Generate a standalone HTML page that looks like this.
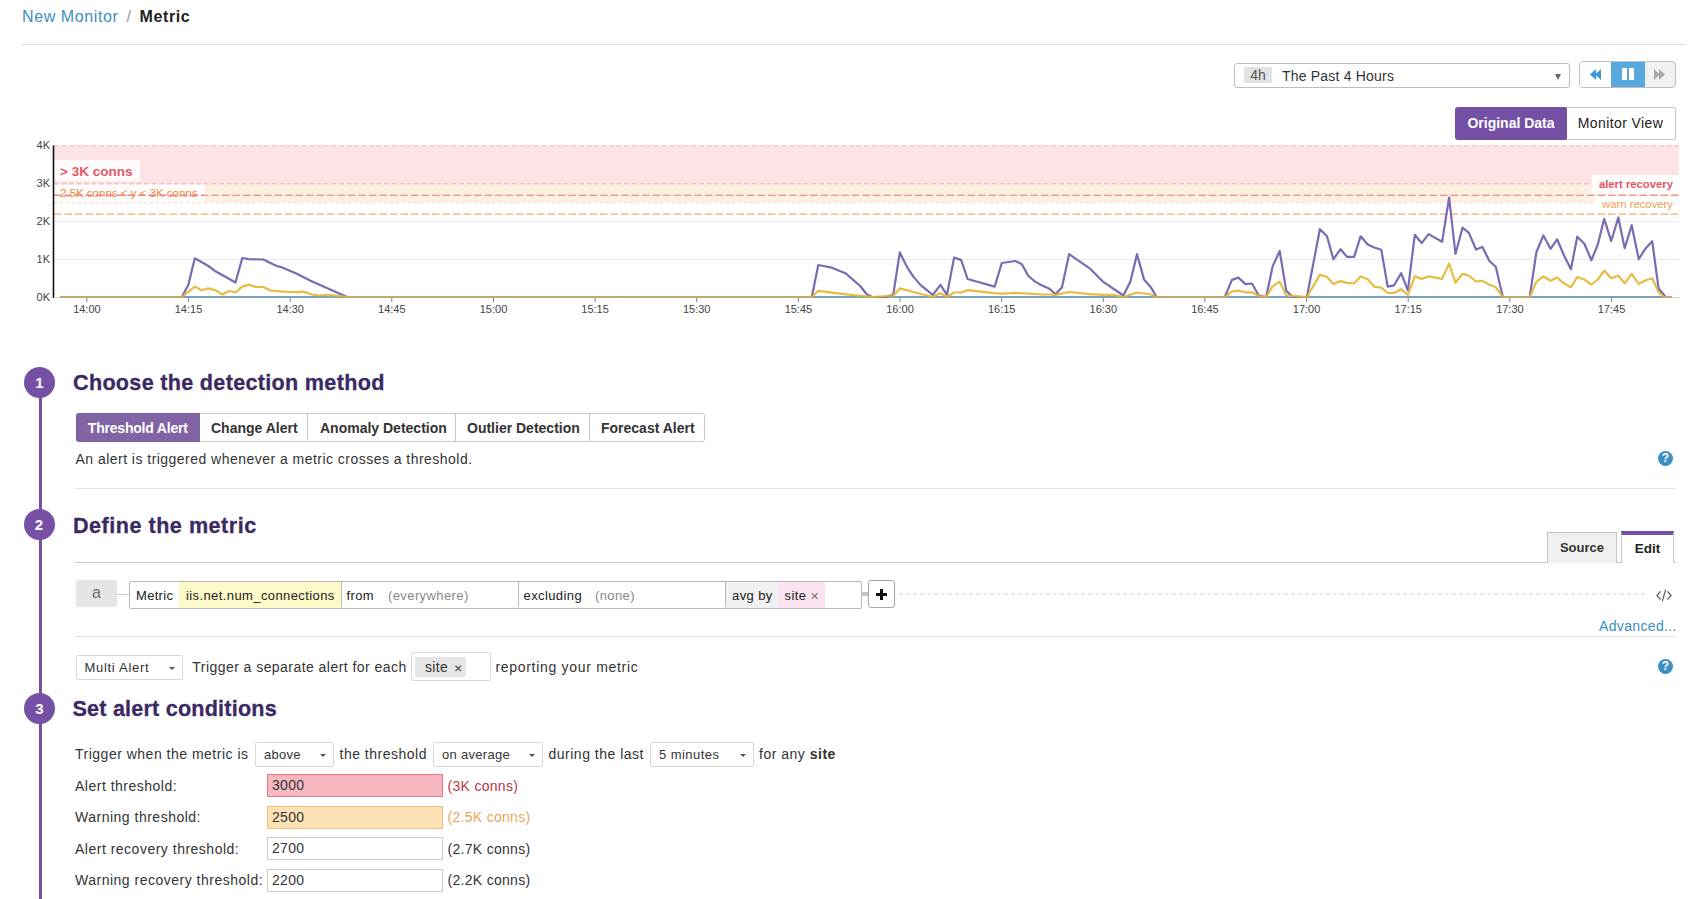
<!DOCTYPE html>
<html><head><meta charset="utf-8">
<style>
*{box-sizing:border-box;margin:0;padding:0}
html,body{width:1694px;height:899px;overflow:hidden;background:#fff}
body{position:relative;font-family:"Liberation Sans",sans-serif;color:#333;font-size:14px}
.a{position:absolute;white-space:nowrap}
.t{letter-spacing:0.5px}
.btn{position:absolute;border:1px solid #c8c8c8;background:#fff;display:flex;align-items:center;justify-content:center;white-space:nowrap}
.sel{position:absolute;border:1px solid #d9d9d9;background:#fff;border-radius:2px;white-space:nowrap}
.caret{position:absolute;width:0;height:0;border-left:3.5px solid transparent;border-right:3.5px solid transparent;border-top:3.5px solid #555;margin-left:0.5px;margin-top:0.5px}
.hline{position:absolute;height:1px;background:#e3e3e3}
.circ{position:absolute;width:31px;height:31px;border-radius:50%;background:#7550a5;color:#fff;font-weight:700;font-size:15px;text-align:center;line-height:31px}
.h2{position:absolute;font-size:21.6px;font-weight:700;color:#3b2963;white-space:nowrap;letter-spacing:0.1px;-webkit-text-stroke:0.3px #3b2963}
.help{position:absolute;width:15px;height:15px;border-radius:50%;background:#3d8fc6;color:#fff;font-weight:700;font-size:12px;line-height:15px;text-align:center}
.inp{position:absolute;border:1px solid #ccc;background:#fff;font-size:14px;padding-left:4px;line-height:20px;letter-spacing:0.3px}
</style></head><body>
<!-- breadcrumb -->
<div class="a" id="bc" style="left:22px;top:7px;font-size:16px;line-height:20px;letter-spacing:0.6px"><span style="color:#3b8ec4">New Monitor</span> <span style="color:#999;padding:0 3px">/</span> <span style="color:#222;font-weight:700">Metric</span></div>
<div class="hline" style="left:21px;top:44px;width:1664px;background:#dcdcdc"></div>

<!-- time selector -->
<div class="a" style="left:1234px;top:63px;width:336px;height:25px;border:1px solid #bdbdbd;border-radius:3px;background:#fff"></div>
<div class="a" style="left:1244px;top:67px;width:28px;height:16px;background:#e2e2e2;border-radius:2px;color:#555;font-size:14px;line-height:16px;text-align:center">4h</div>
<div class="a" id="past" style="left:1282px;top:66px;font-size:14px;line-height:20px;color:#333;letter-spacing:0.2px">The Past 4 Hours</div>
<div class="caret" style="left:1554px;top:73px;border-left-width:3.5px;border-right-width:3.5px;border-top:6px solid #666"></div>

<!-- play controls -->
<div class="a" style="left:1579px;top:61px;width:97px;height:27px;border:1px solid #bfbfbf;border-radius:4px;background:#f1f1f1;overflow:hidden">
  <div class="a" style="left:0;top:0;width:31px;height:25px;background:#fff"></div>
  <div class="a" style="left:31px;top:0;width:34px;height:25px;background:#59a9de"></div>
</div>
<svg class="a" style="left:1588px;top:67px" width="16" height="15" viewBox="0 0 16 15">
  <polygon points="2,7.5 8,2 8,13" fill="#3a98d6"/><polygon points="7,7.5 13,2 13,13" fill="#3a98d6"/>
</svg>
<div class="a" style="left:1622px;top:68px;width:5px;height:12px;background:#fff"></div>
<div class="a" style="left:1629px;top:68px;width:5px;height:12px;background:#fff"></div>
<svg class="a" style="left:1652px;top:67px" width="16" height="15" viewBox="0 0 16 15">
  <polygon points="2,2 8,7.5 2,13" fill="#a9a9a9"/><polygon points="7,2 13,7.5 7,13" fill="#a9a9a9"/>
</svg>

<!-- original / monitor view -->
<div class="a" style="left:1455px;top:107px;width:112px;height:33px;background:#7450a5;border-radius:3px 0 0 3px;color:#fff;font-weight:700;font-size:14px;line-height:33px;text-align:center">Original Data</div>
<div class="a" style="left:1566px;top:107px;width:110px;height:33px;border:1px solid #c4c4c4;border-left:none;border-radius:0 3px 3px 0;color:#222;font-size:14px;line-height:31px;text-align:center;letter-spacing:0.4px">Monitor View</div>
<svg class="a" style="left:0;top:0" width="1694" height="330" viewBox="0 0 1694 330">
<rect x="54" y="145.4" width="1625" height="37.9" fill="#fde3e5"/>
<rect x="54" y="183.3" width="1625" height="18.9" fill="#fdf0e2"/>
<line x1="54" x2="1679" y1="259.6" y2="259.6" stroke="#e4e9f0" stroke-width="1"/>
<line x1="54" x2="1679" y1="221.7" y2="221.7" stroke="#e4e9f0" stroke-width="1"/>
<rect x="54" y="160" width="86" height="21" fill="#fff" fill-opacity="0.85"/>
<rect x="54" y="184.1" width="151" height="17.9" fill="#fff" fill-opacity="0.85"/>
<line x1="54" x2="1679" y1="145.9" y2="145.9" stroke="#efbcc1" stroke-width="1" stroke-dasharray="5,2.5"/>
<line x1="54" x2="1679" y1="183.8" y2="183.8" stroke="#e9a4aa" stroke-width="1" stroke-dasharray="5,2.5"/>
<line x1="54" x2="1679" y1="195.2" y2="195.2" stroke="#e6737c" stroke-width="1.1" stroke-dasharray="7.5,3"/>
<line x1="54" x2="1679" y1="202.8" y2="202.8" stroke="#f6d9bd" stroke-width="1" stroke-dasharray="3,3"/>
<line x1="54" x2="1679" y1="214.1" y2="214.1" stroke="#f0ae72" stroke-width="1.1" stroke-dasharray="7.5,3"/>
<rect x="1592" y="175" width="87" height="18.5" fill="#fff" fill-opacity="0.95"/>
<rect x="1595" y="196" width="84" height="16.5" fill="#fff" fill-opacity="0.95"/>
<text x="60" y="175.5" font-family="Liberation Sans" font-weight="700" font-size="13.5" fill="#e65567">&gt; 3K conns</text>
<text x="60" y="197" font-family="Liberation Sans" font-size="11.5" fill="#ec8c3e">2.5K conns &lt; y &lt; 3K conns</text>
<text x="1673" y="188" text-anchor="end" font-family="Liberation Sans" font-weight="700" font-size="11.3" fill="#e65567">alert recovery</text>
<text x="1673" y="207.5" text-anchor="end" font-family="Liberation Sans" font-size="11.3" fill="#f0a050">warn recovery</text>
<line x1="54" x2="205" y1="195.2" y2="195.2" stroke="#ea7880" stroke-width="1" stroke-dasharray="7,3.5" stroke-opacity="0.8"/>
<line x1="53.5" x2="53.5" y1="145.4" y2="298" stroke="#111" stroke-width="1.6"/>
<line x1="54" x2="1679" y1="297.5" y2="297.5" stroke="#d0d0d0" stroke-width="1"/>
<text x="50" y="301.0" text-anchor="end" font-family="Liberation Sans" font-size="11" fill="#444">0K</text>
<text x="50" y="263.1" text-anchor="end" font-family="Liberation Sans" font-size="11" fill="#444">1K</text>
<text x="50" y="225.2" text-anchor="end" font-family="Liberation Sans" font-size="11" fill="#444">2K</text>
<text x="50" y="187.3" text-anchor="end" font-family="Liberation Sans" font-size="11" fill="#444">3K</text>
<text x="50" y="149.4" text-anchor="end" font-family="Liberation Sans" font-size="11" fill="#444">4K</text>
<line x1="86.9" x2="86.9" y1="297" y2="302" stroke="#7d8590" stroke-width="1"/>
<text x="86.9" y="312.5" text-anchor="middle" font-family="Liberation Sans" font-size="11" fill="#444">14:00</text>
<line x1="188.5" x2="188.5" y1="297" y2="302" stroke="#7d8590" stroke-width="1"/>
<text x="188.5" y="312.5" text-anchor="middle" font-family="Liberation Sans" font-size="11" fill="#444">14:15</text>
<line x1="290.2" x2="290.2" y1="297" y2="302" stroke="#7d8590" stroke-width="1"/>
<text x="290.2" y="312.5" text-anchor="middle" font-family="Liberation Sans" font-size="11" fill="#444">14:30</text>
<line x1="391.8" x2="391.8" y1="297" y2="302" stroke="#7d8590" stroke-width="1"/>
<text x="391.8" y="312.5" text-anchor="middle" font-family="Liberation Sans" font-size="11" fill="#444">14:45</text>
<line x1="493.5" x2="493.5" y1="297" y2="302" stroke="#7d8590" stroke-width="1"/>
<text x="493.5" y="312.5" text-anchor="middle" font-family="Liberation Sans" font-size="11" fill="#444">15:00</text>
<line x1="595.1" x2="595.1" y1="297" y2="302" stroke="#7d8590" stroke-width="1"/>
<text x="595.1" y="312.5" text-anchor="middle" font-family="Liberation Sans" font-size="11" fill="#444">15:15</text>
<line x1="696.7" x2="696.7" y1="297" y2="302" stroke="#7d8590" stroke-width="1"/>
<text x="696.7" y="312.5" text-anchor="middle" font-family="Liberation Sans" font-size="11" fill="#444">15:30</text>
<line x1="798.4" x2="798.4" y1="297" y2="302" stroke="#7d8590" stroke-width="1"/>
<text x="798.4" y="312.5" text-anchor="middle" font-family="Liberation Sans" font-size="11" fill="#444">15:45</text>
<line x1="900.0" x2="900.0" y1="297" y2="302" stroke="#7d8590" stroke-width="1"/>
<text x="900.0" y="312.5" text-anchor="middle" font-family="Liberation Sans" font-size="11" fill="#444">16:00</text>
<line x1="1001.7" x2="1001.7" y1="297" y2="302" stroke="#7d8590" stroke-width="1"/>
<text x="1001.7" y="312.5" text-anchor="middle" font-family="Liberation Sans" font-size="11" fill="#444">16:15</text>
<line x1="1103.3" x2="1103.3" y1="297" y2="302" stroke="#7d8590" stroke-width="1"/>
<text x="1103.3" y="312.5" text-anchor="middle" font-family="Liberation Sans" font-size="11" fill="#444">16:30</text>
<line x1="1204.9" x2="1204.9" y1="297" y2="302" stroke="#7d8590" stroke-width="1"/>
<text x="1204.9" y="312.5" text-anchor="middle" font-family="Liberation Sans" font-size="11" fill="#444">16:45</text>
<line x1="1306.6" x2="1306.6" y1="297" y2="302" stroke="#7d8590" stroke-width="1"/>
<text x="1306.6" y="312.5" text-anchor="middle" font-family="Liberation Sans" font-size="11" fill="#444">17:00</text>
<line x1="1408.2" x2="1408.2" y1="297" y2="302" stroke="#7d8590" stroke-width="1"/>
<text x="1408.2" y="312.5" text-anchor="middle" font-family="Liberation Sans" font-size="11" fill="#444">17:15</text>
<line x1="1509.9" x2="1509.9" y1="297" y2="302" stroke="#7d8590" stroke-width="1"/>
<text x="1509.9" y="312.5" text-anchor="middle" font-family="Liberation Sans" font-size="11" fill="#444">17:30</text>
<line x1="1611.5" x2="1611.5" y1="297" y2="302" stroke="#7d8590" stroke-width="1"/>
<text x="1611.5" y="312.5" text-anchor="middle" font-family="Liberation Sans" font-size="11" fill="#444">17:45</text>
<line x1="182" x2="1672" y1="297" y2="297" stroke="#7aa2bd" stroke-width="2.2"/>
<polyline points="60.0,297.0 181.8,297.0 188.3,284.9 194.8,258.3 208.4,266.0 215.5,271.3 235.5,282.5 242.3,258.0 248.9,259.1 263.3,259.5 270.4,263.0 276.8,266.0 282.2,267.4 296.3,273.6 310.5,280.7 347.1,297.0 350.6,297.0 811.8,297.0 818.3,265.0 831.9,267.7 846.0,273.6 860.2,286.0 866.7,294.3 872.0,297.0 887.4,297.0 893.3,294.3 899.8,252.4 906.8,266.6 913.3,276.6 920.4,284.9 932.8,294.9 940.5,284.9 947.0,294.9 954.1,257.5 961.2,260.1 967.6,279.0 994.7,286.6 1001.8,263.0 1015.4,261.0 1021.9,264.2 1028.4,276.0 1035.5,281.9 1042.0,285.5 1049.0,288.4 1055.5,294.3 1062.0,287.2 1069.1,254.2 1090.4,268.9 1103.3,281.9 1123.4,295.5 1130.5,281.3 1137.0,254.2 1144.1,279.6 1151.2,287.8 1156.5,297.0 1158.8,297.0 1224.8,297.0 1231.9,279.9 1238.4,277.6 1245.5,284.1 1252.0,283.5 1258.5,295.3 1266.2,297.0 1272.6,266.4 1279.7,251.0 1286.2,290.6 1292.7,297.0 1306.9,297.0 1319.9,229.2 1327.0,236.3 1333.4,259.3 1340.5,249.2 1347.0,256.9 1354.1,256.9 1360.6,236.3 1367.7,244.5 1374.2,247.5 1381.3,249.8 1387.7,286.6 1394.1,285.3 1401.1,273.2 1407.9,290.4 1414.8,234.8 1421.6,243.1 1428.6,234.1 1442.1,241.8 1449.1,197.7 1455.5,254.0 1462.5,227.7 1468.9,232.9 1476.0,249.5 1482.4,246.9 1489.4,261.0 1495.8,266.8 1502.8,297.0 1529.7,297.0 1536.4,252.0 1543.4,235.4 1550.5,248.8 1557.1,239.3 1563.9,255.2 1570.9,269.3 1577.3,236.7 1584.4,243.7 1591.4,260.4 1597.8,244.4 1604.2,218.8 1611.2,241.2 1618.3,217.5 1624.7,248.2 1631.7,225.2 1638.7,259.1 1645.8,248.2 1652.2,241.2 1658.6,288.5 1665.6,297.0 1672.0,297.0" fill="none" stroke="#7a6ab4" stroke-width="2.2" stroke-linejoin="round"/>
<polyline points="60.0,297.0 181.8,297.0 194.8,286.6 201.6,290.2 208.4,288.4 215.5,290.2 222.5,294.5 229.0,291.0 235.5,292.5 242.3,286.6 248.9,284.6 255.6,287.0 263.3,287.0 270.4,290.5 279.8,291.4 289.2,292.0 296.3,292.2 303.4,291.6 311.7,294.5 318.8,295.5 327.0,294.9 335.3,295.7 347.1,297.0 811.8,297.0 818.3,290.8 846.0,294.3 872.0,297.0 893.3,295.5 899.8,288.4 932.8,297.0 940.5,293.1 947.0,297.0 954.1,292.5 961.2,292.5 967.6,290.2 994.2,293.1 1001.8,293.7 1015.4,292.9 1029.0,293.7 1042.0,294.5 1049.0,294.5 1055.5,294.9 1069.1,292.0 1090.4,294.1 1103.3,294.9 1112.8,294.9 1123.4,297.0 1137.0,292.5 1151.2,294.5 1156.5,297.0 1224.8,297.0 1231.9,291.7 1238.4,290.6 1245.5,292.3 1252.0,292.3 1258.5,295.9 1266.2,297.0 1272.6,286.4 1279.7,281.7 1286.2,295.3 1306.9,297.0 1319.9,274.6 1327.0,277.0 1333.4,284.1 1340.5,281.1 1347.0,282.9 1354.1,283.5 1360.6,276.4 1367.7,279.3 1374.2,286.8 1381.3,287.6 1387.7,293.0 1394.1,293.0 1401.1,289.2 1407.9,294.9 1414.8,276.4 1421.6,278.9 1428.6,276.4 1442.1,278.9 1449.1,263.6 1455.5,282.8 1462.5,273.8 1468.9,275.7 1476.0,281.5 1482.4,280.9 1489.4,284.7 1495.8,287.2 1502.8,297.0 1529.7,297.0 1536.4,281.9 1543.4,276.4 1550.5,280.8 1557.1,277.6 1563.9,283.4 1570.9,287.2 1577.3,277.0 1584.4,279.5 1591.4,284.7 1597.8,279.5 1604.2,270.6 1611.2,278.3 1618.3,275.7 1624.7,283.4 1631.7,273.8 1638.7,284.0 1645.8,280.2 1652.2,278.3 1658.6,292.3 1664.3,297.0 1672.0,297.0" fill="none" stroke="#e4b52f" stroke-width="2.2" stroke-linejoin="round" stroke-opacity="0.9"/>
<line x1="60.0" x2="181.8" y1="297" y2="297" stroke="#bfa872" stroke-width="2"/>
<line x1="347.1" x2="811.8" y1="297" y2="297" stroke="#bfa872" stroke-width="2"/>
<line x1="1156.5" x2="1224.8" y1="297" y2="297" stroke="#bfa872" stroke-width="2"/>
<line x1="1502.8" x2="1529.7" y1="297" y2="297" stroke="#bfa872" stroke-width="2"/>
<line x1="1664.3" x2="1672.0" y1="297" y2="297" stroke="#bfa872" stroke-width="2"/>
</svg>
<!-- timeline vertical line -->
<div class="a" style="left:38.5px;top:382px;width:3px;height:517px;background:#7550a5"></div>

<!-- ===== Section 1 ===== -->
<div class="circ" style="left:24px;top:366.5px">1</div>
<div class="h2" id="h1" style="left:73px;top:372px;line-height:21.6px;letter-spacing:0.3px">Choose the detection method</div>

<div class="a" style="left:75.5px;top:413px;width:629px;height:29px;border:1px solid #c9c9c9;border-radius:3px;background:#fff"></div>
<div class="a" style="left:75.5px;top:413px;width:124.5px;height:29px;background:#8064a4;border-radius:3px 0 0 3px;color:#fff;font-weight:700;font-size:14px;line-height:30px;text-align:center;letter-spacing:-0.2px">Threshold Alert</div>
<div class="a" style="left:307px;top:413px;width:1px;height:29px;background:#c9c9c9"></div>
<div class="a" style="left:454.5px;top:413px;width:1px;height:29px;background:#c9c9c9"></div>
<div class="a" style="left:588.5px;top:413px;width:1px;height:29px;background:#c9c9c9"></div>
<div class="a t1" style="left:211px;top:413px;font-weight:700;font-size:14px;line-height:30px;color:#333;letter-spacing:0px">Change Alert</div>
<div class="a t1" style="left:320px;top:413px;font-weight:700;font-size:14px;line-height:30px;color:#333;letter-spacing:0px">Anomaly Detection</div>
<div class="a t1" style="left:467px;top:413px;font-weight:700;font-size:14px;line-height:30px;color:#333;letter-spacing:0px">Outlier Detection</div>
<div class="a t1" style="left:601px;top:413px;font-weight:700;font-size:14px;line-height:30px;color:#333;letter-spacing:0px">Forecast Alert</div>

<div class="a t" id="desc" style="left:75.5px;top:451px;line-height:16px;letter-spacing:0.47px">An alert is triggered whenever a metric crosses a threshold.</div>
<div class="help" style="left:1658px;top:450.5px">?</div>
<div class="hline" style="left:75px;top:488px;width:1601px"></div>

<!-- ===== Section 2 ===== -->
<div class="circ" style="left:23.5px;top:508.5px">2</div>
<div class="h2" id="h2" style="left:73px;top:514.5px;line-height:21.6px;letter-spacing:0.5px">Define the metric</div>

<div class="hline" style="left:75px;top:562px;width:1601px;background:#c8c8c8"></div>
<div class="a" style="left:1547px;top:532px;width:70px;height:31px;background:#f0f0f0;border:1px solid #c4c4c4;border-bottom:none;font-weight:700;font-size:13px;line-height:30px;text-align:center;color:#333;letter-spacing:0px">Source</div>
<div class="a" style="left:1621px;top:531px;width:53px;height:32px;background:#fff;border:1px solid #c4c4c4;border-top:4px solid #7550a5;border-bottom:none;font-weight:700;font-size:13.5px;line-height:28px;text-align:center;color:#222">Edit</div>

<div class="a" style="left:76px;top:580px;width:41px;height:27px;background:#e5e5e5;border-radius:3px;color:#707070;font-size:16px;line-height:26px;text-align:center">a</div>
<div class="a" style="left:117px;top:594px;width:12px;height:1px;background:#c8c8c8"></div>
<div class="a" style="left:128.5px;top:581px;width:733px;height:27.5px;border:1px solid #b8b8b8;border-radius:2px;background:#fff;overflow:hidden">
  <div class="a" style="left:49.5px;top:0;width:162px;height:26px;background:#fdf9c9"></div>
  <div class="a" style="left:211.5px;top:0;width:1px;height:25px;background:#b8b8b8"></div>
  <div class="a" style="left:388px;top:0;width:1px;height:25px;background:#b8b8b8"></div>
  <div class="a" style="left:595px;top:0;width:1px;height:25px;background:#b8b8b8"></div>
  <div class="a" style="left:596px;top:0;width:53px;height:26px;background:#f1f1f1"></div>
  <div class="a" style="left:648.5px;top:0;width:47px;height:26px;background:#fbe3f1"></div>
</div>
<div class="a t" style="left:136px;top:588px;font-size:13px;line-height:16px;letter-spacing:0.3px;color:#222">Metric</div>
<div class="a t" style="left:186px;top:588px;font-size:13px;line-height:16px;letter-spacing:0.4px;color:#222">iis.net.num_connections</div>
<div class="a t" style="left:346.5px;top:588px;font-size:13px;line-height:16px;letter-spacing:0.4px;color:#222">from</div>
<div class="a t" style="left:388px;top:588px;font-size:13px;line-height:16px;letter-spacing:0.4px;color:#888">(everywhere)</div>
<div class="a t" style="left:523.5px;top:588px;font-size:13px;line-height:16px;letter-spacing:0.4px;color:#222">excluding</div>
<div class="a t" style="left:595px;top:588px;font-size:13px;line-height:16px;letter-spacing:0.4px;color:#888">(none)</div>
<div class="a t" style="left:732px;top:588px;font-size:13px;line-height:16px;letter-spacing:0.4px;color:#222">avg by</div>
<div class="a t" style="left:784.5px;top:588px;font-size:13px;line-height:16px;letter-spacing:0.4px;color:#222">site <span style="color:#777;font-size:11px">&#x2715;</span></div>
<div class="a" style="left:861px;top:592px;width:7px;height:3.5px;background:#c4c4c4"></div>
<div class="a" style="left:868px;top:580px;width:27px;height:28px;border:1px solid #a8a8a8;border-radius:3px;background:#fff"></div>
<div class="a" style="left:876px;top:593px;width:11px;height:2.5px;background:#111"></div>
<div class="a" style="left:880.2px;top:588.7px;width:2.5px;height:11px;background:#111"></div>
<svg class="a" style="left:899px;top:593px" width="750" height="2"><line x1="0" x2="749" y1="1" y2="1" stroke="#d3d3d3" stroke-width="1" stroke-dasharray="4,3"/></svg>
<svg class="a" style="left:1656px;top:589px" width="16" height="13" viewBox="0 0 16 13"><path d="M4.6,2.4 L0.9,6.5 L4.6,10.6 M9.6,0.6 L6.4,12.2 M11.4,2.4 L15.1,6.5 L11.4,10.6" fill="none" stroke="#5a5a5a" stroke-width="1.2"/></svg>
<div class="a" id="adv" style="left:1599px;top:617.5px;font-size:14px;line-height:16px;color:#3b8ec4;letter-spacing:0.35px">Advanced...</div>
<div class="hline" style="left:75px;top:636px;width:1601px"></div>

<div class="sel" style="left:76px;top:655px;width:107px;height:25px"></div>
<div class="a t" style="left:84.5px;top:659.5px;font-size:13px;line-height:16px;letter-spacing:0.7px;color:#333">Multi Alert</div>
<div class="caret" style="left:168px;top:666px"></div>
<div class="a t" id="trig" style="left:192.3px;top:659px;line-height:16px;letter-spacing:0.45px">Trigger a separate alert for each</div>
<div class="sel" style="left:410.5px;top:652px;width:80px;height:28.5px"></div>
<div class="a" style="left:414.5px;top:657px;width:51px;height:19.5px;background:#e6e6e6;border-radius:2px"></div>
<div class="a t" style="left:425px;top:659px;font-size:14px;line-height:16px;letter-spacing:0.3px;color:#333">site<span style="color:#666;font-size:10px;font-weight:700;margin-left:5.5px">&#x2715;</span></div>
<div class="a t" style="left:495.4px;top:659px;line-height:16px;letter-spacing:0.7px">reporting your metric</div>
<div class="help" style="left:1658px;top:658.5px">?</div>

<!-- ===== Section 3 ===== -->
<div class="circ" style="left:24px;top:692.5px">3</div>
<div class="h2" id="h3" style="left:72.5px;top:698.3px;line-height:21.6px;letter-spacing:0.2px">Set alert conditions</div>

<div class="a t" style="left:75px;top:746px;line-height:16px;letter-spacing:0.5px">Trigger when the metric is</div>
<div class="sel" style="left:255px;top:742px;width:79px;height:24.5px"></div>
<div class="a t" style="left:264px;top:746.5px;font-size:13px;line-height:16px;letter-spacing:0.25px">above</div>
<div class="caret" style="left:319px;top:753px"></div>
<div class="a t" style="left:339.5px;top:746px;line-height:16px;letter-spacing:0.5px">the threshold</div>
<div class="sel" style="left:433px;top:742px;width:110px;height:24.5px"></div>
<div class="a t" style="left:442px;top:746.5px;font-size:13px;line-height:16px;letter-spacing:0.3px">on average</div>
<div class="caret" style="left:528px;top:753px"></div>
<div class="a t" style="left:548.5px;top:746px;line-height:16px;letter-spacing:0.5px">during the last</div>
<div class="sel" style="left:650px;top:742px;width:104px;height:24.5px"></div>
<div class="a t" style="left:659px;top:746.5px;font-size:13px;line-height:16px;letter-spacing:0.45px">5 minutes</div>
<div class="caret" style="left:739px;top:753px"></div>
<div class="a t" style="left:759px;top:746px;line-height:16px;letter-spacing:0.5px">for any <b>site</b></div>

<div class="a t" style="left:75px;top:778px;line-height:16px;letter-spacing:0.5px">Alert threshold:</div>
<div class="inp" style="left:267px;top:774px;width:176px;height:23px;background:#f5b8c1;border-color:#e47a88">3000</div>
<div class="a t" style="left:447.5px;top:778px;line-height:16px;letter-spacing:0.3px;color:#b8374a">(3K conns)</div>

<div class="a t" style="left:75px;top:809px;line-height:16px;letter-spacing:0.5px">Warning threshold:</div>
<div class="inp" style="left:267px;top:805.5px;width:176px;height:23px;background:#fde2b6;border-color:#f1bf76">2500</div>
<div class="a t" style="left:447.5px;top:809px;line-height:16px;letter-spacing:0.3px;color:#eaa55c">(2.5K conns)</div>

<div class="a t" style="left:75px;top:841px;line-height:16px;letter-spacing:0.5px">Alert recovery threshold:</div>
<div class="inp" style="left:267px;top:837px;width:176px;height:23px">2700</div>
<div class="a t" style="left:447.5px;top:841px;line-height:16px;letter-spacing:0.3px">(2.7K conns)</div>

<div class="a t" style="left:75px;top:872px;line-height:16px;letter-spacing:0.5px">Warning recovery threshold:</div>
<div class="inp" style="left:267px;top:869px;width:176px;height:23px">2200</div>
<div class="a t" style="left:447.5px;top:872px;line-height:16px;letter-spacing:0.3px">(2.2K conns)</div>
</body></html>
